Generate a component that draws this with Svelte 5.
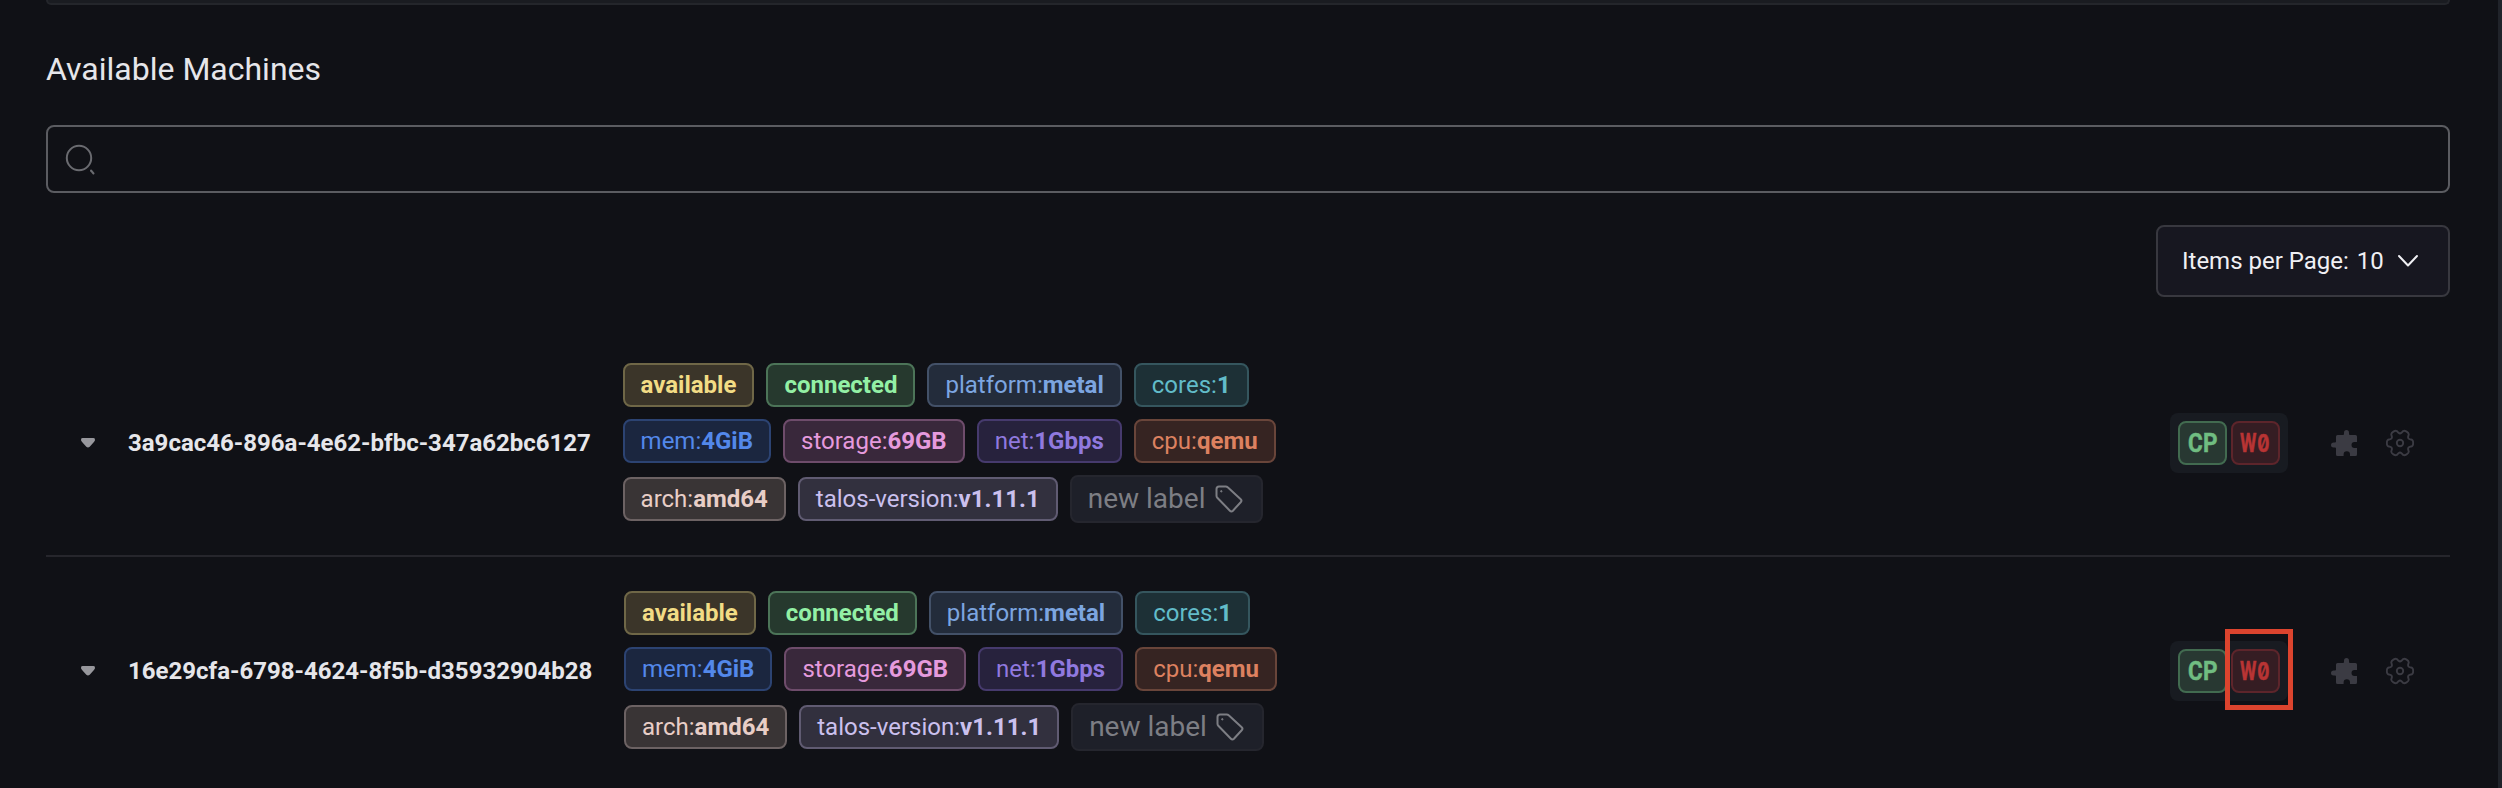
<script>
  const labels = [
    [['', 'available', '#f2dc85', '#3b3529', '#6f6747'], ['', 'connected', '#93f0a5', '#26392e', '#4c7458'], ['platform:', 'metal', '#7ca5e0', '#232c3b', '#435168'], ['cores:', '1', '#62bcc9', '#1d3036', '#35565e']],
    [['mem:', '4GiB', '#5388ea', '#1b263f', '#2c4372'], ['storage:', '69GB', '#e59add', '#39283b', '#6e4c6b'], ['net:', '1Gbps', '#9079df', '#27223d', '#463a6d'], ['cpu:', 'qemu', '#dd8160', '#362422', '#69453a']],
    [['arch:', 'amd64', '#e8cec7', '#393435', '#6c6263'], ['talos-version:', 'v1.11.1', '#cbc0ee', '#32303e', '#605b72']]
  ];
  const machines = [
    { id: '3a9cac46-896a-4e62-bfbc-347a62bc6127', marked: false },
    { id: '16e29cfa-6798-4624-8f5b-d35932904b28', marked: true }
  ];

  // six-lobed gear outline around (14, 14)
  const point = (deg, r) => {
    const a = (deg * Math.PI) / 180;
    return `${(14 + r * Math.cos(a)).toFixed(2)} ${(14 + r * Math.sin(a)).toFixed(2)}`;
  };
  const gear =
    [0, 60, 120, 180, 240, 300]
      .map((t, i) => `${i ? 'L' : 'M'}${point(t - 15, 12.4)}Q${point(t - 10, 13.4)} ${point(t, 13.2)}Q${point(t + 10, 13.4)} ${point(t + 15, 12.4)}L${point(t + 22, 10.3)}Q${point(t + 30, 9)} ${point(t + 38, 10.3)}`)
      .join('') + 'Z';
</script>

<div class="page">
  <main>
    <div class="card"></div>
    <h1>Available Machines</h1>
    <div class="search">
      <svg width="32" height="32" viewBox="0 0 32 32" fill="none" stroke="#6a6b70" stroke-width="2" stroke-linecap="round"><circle cx="15" cy="15" r="12.2" /><path d="M27 27.5l2.5 3" /></svg>
    </div>
    <div class="pager">
      <button><span>Items per Page: <span class="num">10</span></span>
        <svg width="22" height="14" viewBox="0 0 22 14" fill="none" stroke="#f0f0f4" stroke-width="2" stroke-linecap="round" stroke-linejoin="round"><path d="M2 2l9 9.5L20 2" /></svg>
      </button>
    </div>
    {#each machines as m}
      <div class="row">
        <svg class="caret" width="16" height="12" viewBox="0 0 16 12"><path d="M2.5 1h11Q15.3 1 15 3.200Q14.700 4.300 13.500 5.500L9.700 9.800Q8 11.300 6.300 9.800L2.500 5.500Q1.300 4.300 1 3.200Q.7 1 2.500 1z" fill="#97979c" /></svg>
        <div class="id">{m.id}</div>
        <div class="labels">
          {#each labels as line, i}
            <div class="line">
              {#each line as [k, v, color, bg, border]}
                <span class="tag" style="color:{color};background:{bg};border-color:{border}">{k}<b>{v}</b></span>
              {/each}
              {#if i === 2}
                <span class="new">new label
                  <svg width="28" height="28" viewBox="0 0 28 28" fill="none" stroke="#7d7e84" stroke-width="2" stroke-linejoin="round"><path d="M4 1.500h6.700q1.200 0 2 .8L25.700 14.200q1.500 1.500 0 3.100l-7.800 8.400q-1.500 1.500-3 0L2.300 12.800q-.8-.8-.8-2V4Q1.500 1.500 4 1.500z" /><circle cx="6.300" cy="6.300" r=".7" fill="#7d7e84" stroke-width="1" /></svg>
                </span>
              {/if}
            </div>
          {/each}
        </div>
        <div class="roles">
          <span class="role cp"><span class="ch c">C</span><span class="ch p">P</span></span>
          <span class="role w"><span class="ch wide">W</span><span class="ch zero">0</span></span>
          {#if m.marked}<i class="mark"></i>{/if}
        </div>
        <svg class="puzzle" width="28" height="28" viewBox="0 0 28 28"><path d="M7.500 6H13q1 0 1-1V3.700a2.500 2.700 0 0 1 5 0V5q0 1 1 1h5.500Q27 6 27 7.500V13h-2.500a3 3 0 0 0 0 6H27v6.500q0 1.500-1.500 1.500H20v-1.500a3.200 3.200 0 0 0-6.400 0V27H7.500Q6 27 6 25.500V19.500q0-1-1-1H3.700a2.700 2.500 0 0 1 0-5H5q1 0 1-1V7.500Q6 6 7.500 6z" fill="#3b3b43" /></svg>
        <svg class="gear" width="28" height="28" viewBox="0 0 28 28" fill="none" stroke="#3b3b43" stroke-width="1.900" stroke-linejoin="round"><path d={gear} /><circle cx="14" cy="14" r="3.200" /></svg>
      </div>
    {/each}
  </main>
  <div class="scrollbar"></div>
</div>

<style>
  :global(body) { background: #101116; }
  .page { display: flex; height: 788px; overflow: hidden; background: #101116; color: #e6e6ea; font-family: Roboto, sans-serif; font-size: 24px; box-sizing: border-box; }
  .page :global(*) { box-sizing: border-box; }
  main { flex: 1; padding: 0 48px 0 46px; min-width: 0; }
  .scrollbar { width: 4px; background: #20232a; }
  .card { height: 5px; background: #1a1c21; border: 2px solid #24262b; border-top: 0; border-radius: 0 0 8px 8px; }
  h1 { margin: 42px 0 0; height: 44px; line-height: 44px; font-size: 32px; font-weight: 400; white-space: nowrap; }
  .search { margin-top: 34px; height: 68px; border: 2px solid #5b5c61; border-radius: 8px; padding: 16px; display: flex; }
  .pager { display: flex; justify-content: flex-end; margin-top: 32px; margin-bottom: 32px; }
  button { width: 294px; height: 72px; border: 2px solid #38383f; border-radius: 8px; background: #171720; color: #f0f0f4; font: 24px Roboto, sans-serif; padding: 0 29px 0 24px; display: flex; align-items: center; justify-content: space-between; white-space: nowrap; }
  .num { margin-left: 2px; }
  .row { height: 228px; padding: 1px 36px 0 34px; display: flex; align-items: center; border-bottom: 2px solid #26262c; }
  .row:last-child { border-color: transparent; }
  .caret { flex: none; margin-right: 32px; }
  .id { font-weight: 700; white-space: nowrap; margin-right: 31.700px; }
  .labels { display: flex; flex-direction: column; gap: 12px; }
  .line { display: flex; align-items: center; gap: 12px; }
  .tag { height: 44px; line-height: 40px; padding: 0 16px; border: 2px solid; border-radius: 8px; white-space: nowrap; }
  .new { height: 48px; width: 193px; padding: 0 18px 0 16px; border: 2px solid #25262e; border-radius: 8px; background: #1e2029; color: #7d7e84; font-size: 28px; display: flex; align-items: center; justify-content: space-between; white-space: nowrap; }
  .roles { position: relative; margin-left: auto; width: 118px; height: 60px; padding: 8px; border-radius: 8px; background: #181b21; display: flex; gap: 4px; }
  .role { width: 49px; height: 44px; line-height: 41px; display: flex; justify-content: center; border: 2px solid; border-radius: 8px; font-weight: 700; font-size: 25px; -webkit-text-stroke: .5px currentColor; }
  .ch { width: 14.600px; display: flex; justify-content: center; }
  .c { transform: scaleX(.9); }
  .p { transform: scaleX(.9); }
  .wide { transform: scaleX(.75); }
  .zero { font-family: Inter, sans-serif; font-size: 24.500px; font-feature-settings: "zero"; transform: scaleX(.74); }
  .cp { color: #70bd81; background: #283832; border-color: #426b50; }
  .w { color: #b83434; background: #351d23; border-color: #5d252b; }
  .mark { position: absolute; left: 55px; top: -12px; width: 68px; height: 81px; border: 5px solid #dc442e; }
  .puzzle { margin-left: 42px; }
  .gear { margin-left: 28px; }
</style>
